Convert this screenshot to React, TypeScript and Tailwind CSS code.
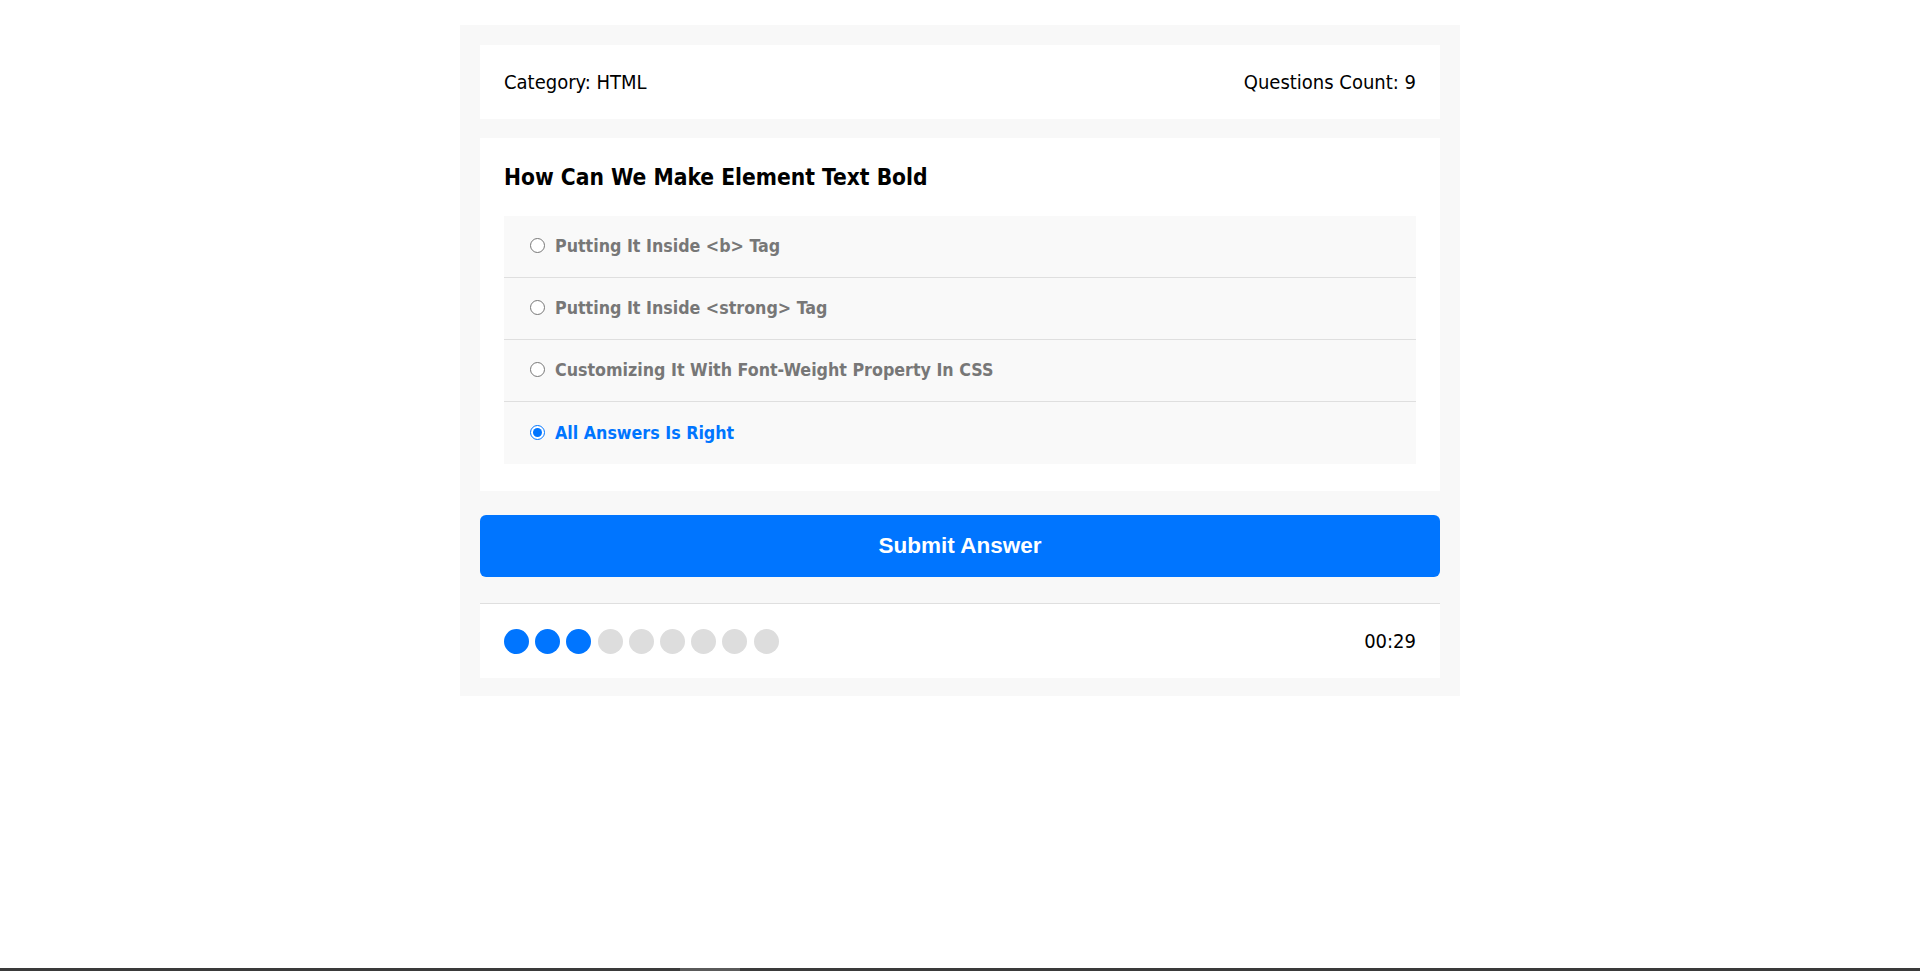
import React, { useState } from "react";

const answers = [
  "Putting It Inside <b> Tag",
  "Putting It Inside <strong> Tag",
  "Customizing It With Font-Weight Property In CSS",
  "All Answers Is Right",
];

export default function App() {
  const [selected, setSelected] = useState(3);
  const font = { fontFamily: '"DejaVu Sans Condensed", "DejaVu Sans", sans-serif' };
  return (
    <div className="min-h-[971px] bg-white pt-[25px]" style={font}>
      <div className="mx-auto w-[1000px] bg-[#f8f8f8] px-[20px] pt-[20px] pb-[18px]">
        <div className="flex h-[74px] items-center justify-between bg-white px-[24px] text-[20px] text-black">
          <div>Category: HTML</div>
          <div>Questions Count: 9</div>
        </div>
        <div className="mt-[19px] bg-white px-[24px] pt-[25px] pb-[27px]">
          <h2 className="m-0 mb-[25px] h-[28px] text-[22.6px] font-bold leading-[28px] text-black">
            How Can We Make Element Text Bold
          </h2>
          <div className="bg-[#f9f9f9]">
            {answers.map((a, i) => (
              <label
                key={i}
                className={`flex h-[62px] cursor-pointer items-center pl-[26px] ${
                  i < answers.length - 1 ? "border-b border-[#dfdfdf]" : ""
                }`}
              >
                <input
                  type="radio"
                  name="q"
                  checked={selected === i}
                  onChange={() => setSelected(i)}
                  className="m-0 -mt-[2px] h-[15px] w-[15px] accent-[#0075ff]"
                />
                <span
                  className={`ml-[10px] text-[17.7px] font-bold ${
                    selected === i ? "text-[#0075ff]" : "text-[#777777]"
                  }`}
                >
                  {a}
                </span>
              </label>
            ))}
          </div>
        </div>
        <button
          className="mt-[24px] block h-[62px] w-full cursor-pointer rounded-[6px] bg-[#0075ff] text-[22.5px] font-bold text-white"
          style={{ fontFamily: '"Liberation Sans", Arial, sans-serif' }}
        >
          Submit Answer
        </button>
        <div className="mt-[26px] flex h-[75px] items-center justify-between border-t border-[#dfdfdf] bg-white px-[24px]">
          <div className="flex gap-[6.2px]">
            {Array.from({ length: 9 }).map((_, i) => (
              <span
                key={i}
                className={`block h-[25px] w-[25px] rounded-full ${
                  i < 3 ? "bg-[#0075ff]" : "bg-[#dddddd]"
                }`}
              />
            ))}
          </div>
          <div className="text-[20px] text-black">00:29</div>
        </div>
      </div>
      <div className="fixed inset-x-0 bottom-0 h-[3px] bg-[#3a3a3a]">
        <div className="ml-[680px] h-full w-[60px] bg-[#5a5a5a]" />
      </div>
    </div>
  );
}
